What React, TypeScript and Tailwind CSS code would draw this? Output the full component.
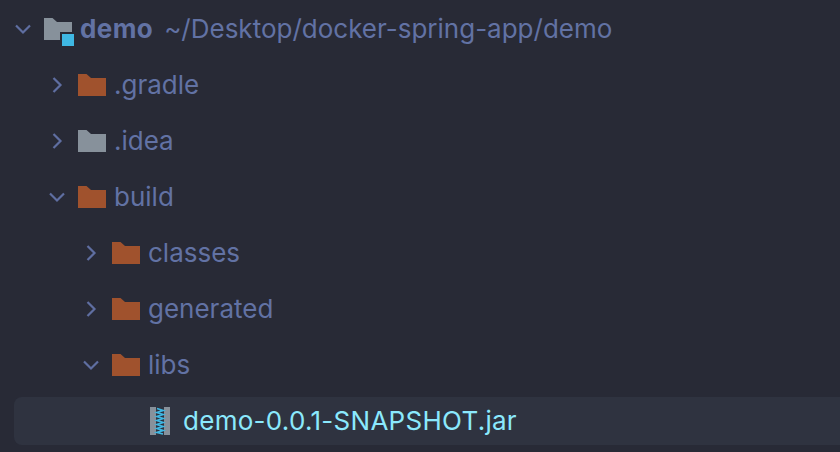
import React from "react";

const Folder = ({ color, className = "" }: { color: string; className?: string }) => (
  <svg width="28" height="22" viewBox="0 0 28 22" className={`shrink-0 ${className}`}>
    <path d="M0 0H8.5L13 4H28V22H0Z" fill={color} />
  </svg>
);

const Chevron = ({ open }: { open: boolean }) => (
  <svg width="18" height="18" viewBox="0 0 18 18" fill="none" stroke="#5f6ea1" strokeWidth="2.2" className="shrink-0">
    {open ? <path d="M2 5.5L9 12.5L16 5.5" /> : <path d="M5.5 2L12.5 9L5.5 16" />}
  </svg>
);

const Jar = () => (
  <svg width="20" height="28" viewBox="0 0 20 28" className="shrink-0">
    <rect width="20" height="28" fill="#87919b" />
    <rect x="6" width="8" height="28" fill="#2f3340" />
    <path
      d="M7 1.5L13 3.5L7 5.5L13 7.5L7 9.5L13 11.5L7 13.5L13 15.5L7 17.5L13 19.5L7 21.5L13 23.5L7 25.5L13 27"
      fill="none"
      stroke="#3fb8e4"
      strokeWidth="1.8"
    />
  </svg>
);

const ORANGE = "#a0522d";
const GREY = "#87919b";

type R = { pl: string; open: boolean; color: string; name: string };
const rows: R[] = [
  { pl: "pl-[48px]", open: false, color: ORANGE, name: ".gradle" },
  { pl: "pl-[48px]", open: false, color: GREY, name: ".idea" },
  { pl: "pl-[48px]", open: true, color: ORANGE, name: "build" },
  { pl: "pl-[82px]", open: false, color: ORANGE, name: "classes" },
  { pl: "pl-[82px]", open: false, color: ORANGE, name: "generated" },
  { pl: "pl-[82px]", open: true, color: ORANGE, name: "libs" },
];

export default function App() {
  return (
    <div
      className="w-[840px] h-[452px] overflow-hidden bg-[#282a36] text-[#6272a4] text-[26px] leading-none pt-px"
      style={{ fontFamily: "Inter, sans-serif" }}
    >
      <div className="h-14 flex items-center pl-[14px]">
        <Chevron open />
        <div className="relative ml-3 mr-[8px]">
          <Folder color={GREY} className="block" />
          <div className="absolute left-[18px] top-4 w-3 h-3 bg-[#3fb8e4] shadow-[0_0_0_2px_#282a36]" />
        </div>
        <span className="font-bold tracking-[0.4px]">demo</span>
        <span className="ml-[11px]">~/Desktop/docker-spring-app/demo</span>
      </div>
      {rows.map((r) => (
        <div key={r.name} className={`h-14 flex items-center ${r.pl}`}>
          <Chevron open={r.open} />
          <Folder color={r.color} className="ml-3 mr-[8px]" />
          <span>{r.name}</span>
        </div>
      ))}
      <div className="h-14 py-1">
        <div className="h-12 ml-[14px] rounded-l-lg bg-[#2f3340] flex items-center pl-[136px]">
          <Jar />
          <span className="ml-[13px] text-[#8be9fd] tracking-[0.28px]">demo-0.0.1-SNAPSHOT.jar</span>
        </div>
      </div>
    </div>
  );
}
